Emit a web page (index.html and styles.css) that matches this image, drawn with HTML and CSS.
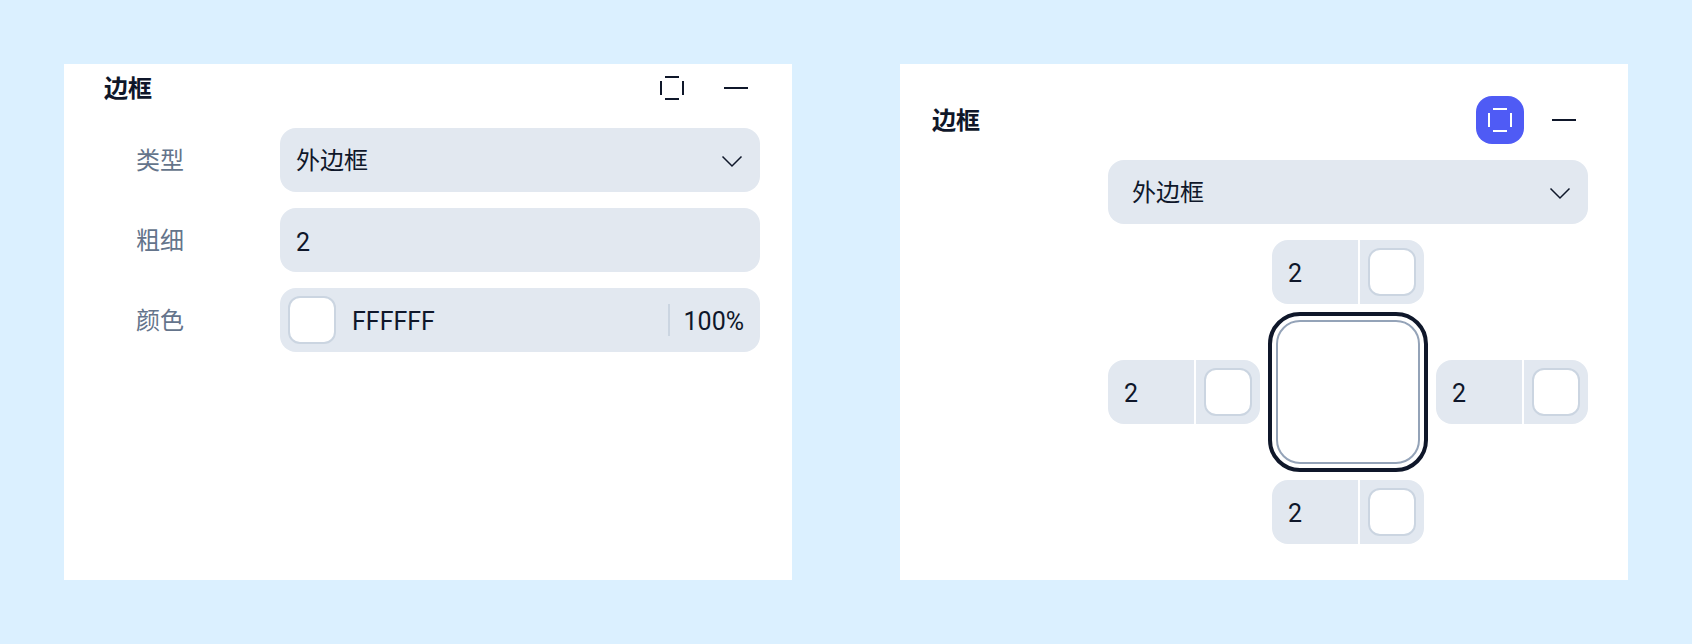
FILE: index.html
```html
<!DOCTYPE html>
<html lang="zh-CN">
<head>
<meta charset="utf-8">
<meta name="viewport" content="width=device-width, initial-scale=1">
<title>边框</title>
<link rel="stylesheet" href="styles.css">
</head>
<body>
<svg class="sprite" aria-hidden="true">
  <symbol id="icon-sides" viewBox="0 0 24 24"><path d="M5 1H19M5 23H19M1 5V19M23 5V19" fill="none" stroke="currentColor" stroke-width="2"/></symbol>
  <symbol id="icon-minus" viewBox="0 0 24 24"><path d="M0 12H24" fill="none" stroke="currentColor" stroke-width="2"/></symbol>
  <symbol id="icon-chevron" viewBox="0 0 24 24"><path d="M2.500 8.500L12 18L21.500 8.500" fill="none" stroke="currentColor" stroke-width="1.5"/></symbol>
</svg>
<main class="board">
  <section class="panel panel-simple">
    <header class="panel-head">
      <h2 class="panel-title">边框</h2>
      <div class="actions">
        <button class="icon-button" type="button" aria-label="独立边框"><svg class="icon"><use href="#icon-sides"/></svg></button>
        <button class="icon-button" type="button" aria-label="移除"><svg class="icon"><use href="#icon-minus"/></svg></button>
      </div>
    </header>
    <div class="rows">
      <div class="row">
        <label class="label" for="type">类型</label>
        <div class="select-wrap">
          <select class="field select" id="type"><option>外边框</option></select>
          <svg class="icon chevron"><use href="#icon-chevron"/></svg>
        </div>
      </div>
      <div class="row">
        <label class="label" for="width">粗细</label>
        <input class="field" id="width" type="text" value="2">
      </div>
      <div class="row">
        <label class="label" for="color">颜色</label>
        <div class="color-field">
          <button class="swatch" type="button" aria-label="选择颜色"></button>
          <input class="plain hex" id="color" type="text" value="FFFFFF">
          <input class="plain opacity" type="text" value="100%" aria-label="不透明度">
        </div>
      </div>
    </div>
  </section>

  <section class="panel panel-sides">
    <header class="panel-head">
      <h2 class="panel-title">边框</h2>
      <div class="actions">
        <button class="icon-button active" type="button" aria-label="独立边框" aria-pressed="true"><svg class="icon"><use href="#icon-sides"/></svg></button>
        <button class="icon-button" type="button" aria-label="移除"><svg class="icon"><use href="#icon-minus"/></svg></button>
      </div>
    </header>
    <div class="sides">
      <div class="select-wrap">
        <select class="field select select-inset" aria-label="类型"><option>外边框</option></select>
        <svg class="icon chevron"><use href="#icon-chevron"/></svg>
      </div>
      <div class="cross">
        <div class="side side-top">
          <input class="plain side-width" type="text" value="2" aria-label="上边框粗细">
          <div class="side-color"><button class="swatch" type="button" aria-label="上边框颜色"></button></div>
        </div>
        <div class="side side-left">
          <input class="plain side-width" type="text" value="2" aria-label="左边框粗细">
          <div class="side-color"><button class="swatch" type="button" aria-label="左边框颜色"></button></div>
        </div>
        <div class="preview"><div class="preview-inner"></div></div>
        <div class="side side-right">
          <input class="plain side-width" type="text" value="2" aria-label="右边框粗细">
          <div class="side-color"><button class="swatch" type="button" aria-label="右边框颜色"></button></div>
        </div>
        <div class="side side-bottom">
          <input class="plain side-width" type="text" value="2" aria-label="下边框粗细">
          <div class="side-color"><button class="swatch" type="button" aria-label="下边框颜色"></button></div>
        </div>
      </div>
    </div>
  </section>
</main>
</body>
</html>
```
FILE: styles.css
```css
:root {
  --ink: #0f172a;
  --muted: #64748b;
  --fill: #e2e8f0;
  --line: #cbd5e1;
  --accent: #4f5bf5;
}

* { box-sizing: border-box; }

body {
  margin: 0;
  background: #dbf0ff;
  color: var(--ink);
  font: 24px/32px Roboto, "Noto Sans CJK SC", sans-serif;
}

button, input, select {
  margin: 0;
  padding: 0;
  border: 0;
  background: none;
  color: inherit;
  font: inherit;
}

input {
  padding-top: 4px;
  font-size: 25px;
}

.sprite { display: none; }

.board {
  display: flex;
  gap: 108px;
  padding: 64px;
}

.panel {
  flex: 1;
  min-width: 0;
  background: #fff;
}

.panel-simple { padding: 0 32px 36px 40px; }
.panel-sides { padding: 32px 40px 36px 32px; }

.panel-head {
  display: flex;
  align-items: center;
  justify-content: space-between;
  margin-bottom: 16px;
}

.panel-title {
  margin: 0;
  padding-top: 2px;
  font-size: 24px;
  font-weight: 700;
}

.actions {
  display: flex;
  gap: 16px;
}

.icon-button {
  display: grid;
  place-items: center;
  width: 48px;
  height: 48px;
  border-radius: 16px;
}

.icon-button.active {
  background: var(--accent);
  color: #fff;
}

.icon {
  display: block;
  width: 24px;
  height: 24px;
}

.rows {
  display: grid;
  grid-template-columns: minmax(0, 1fr);
  gap: 16px;
  padding-left: 32px;
}

.row {
  display: grid;
  grid-template-columns: 144px minmax(0, 1fr);
  align-items: center;
}

.label {
  padding-top: 2px;
  color: var(--muted);
}

.field {
  width: 100%;
  height: 64px;
  padding: 4px 16px 0;
  border-radius: 16px;
  background: var(--fill);
}

.select-wrap {
  display: grid;
  align-items: center;
}

.select-wrap > * { grid-area: 1 / 1; }

.select {
  appearance: none;
  padding-top: 2px;
}

.select-inset { padding-left: 24px; }

.chevron {
  justify-self: end;
  margin-right: 16px;
  pointer-events: none;
}

.color-field {
  display: flex;
  align-items: center;
  height: 64px;
  padding: 0 16px 0 8px;
  border-radius: 16px;
  background: var(--fill);
}

.swatch {
  flex: none;
  width: 48px;
  height: 48px;
  border: 2px solid var(--line);
  border-radius: 12px;
  background: #fff;
}

.plain { min-width: 0; }

.hex {
  flex: 1;
  height: 32px;
  padding-left: 16px;
}

.opacity {
  width: 76px;
  height: 32px;
  border-left: 2px solid var(--line);
  text-align: right;
}

.sides {
  display: grid;
  gap: 16px;
  width: 480px;
  max-width: 100%;
  margin-left: auto;
}

.cross {
  display: grid;
  grid-template-columns: 1fr 160px 1fr;
  grid-template-areas:
    ". top ."
    "left preview right"
    ". bottom .";
  gap: 8px;
  place-items: center;
}

.side {
  display: flex;
  gap: 2px;
  width: 152px;
  height: 64px;
  border-radius: 16px;
  overflow: hidden;
}

.side-top { grid-area: top; }
.side-left { grid-area: left; }
.side-right { grid-area: right; }
.side-bottom { grid-area: bottom; }

.side-width {
  flex: 1;
  padding-left: 16px;
  background: var(--fill);
}

.side-color {
  padding: 8px;
  background: var(--fill);
}

.preview {
  grid-area: preview;
  display: grid;
  width: 160px;
  height: 160px;
  padding: 4px;
  border: 4px solid var(--ink);
  border-radius: 32px;
}

.preview-inner {
  border: 2px solid #94a3b8;
  border-radius: 24px;
}
```
